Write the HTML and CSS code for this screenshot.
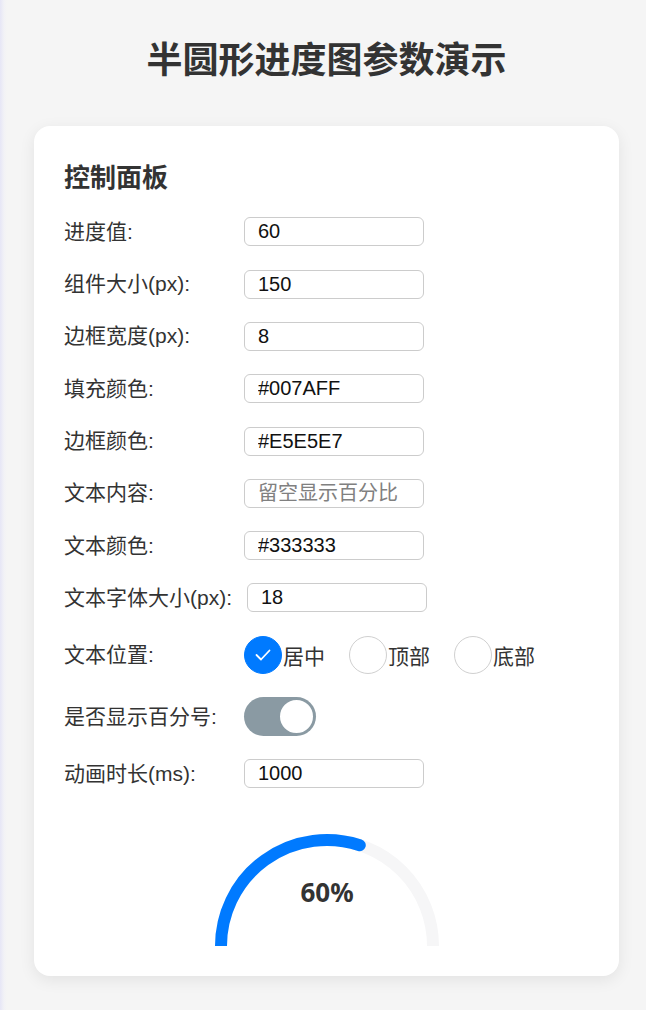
FILE: index.html
```html
<!DOCTYPE html>
<html lang="zh-CN">
<head>
  <meta charset="UTF-8">
  <meta name="viewport" content="width=device-width, initial-scale=1.0">
  <title>半圆形进度图参数演示</title>
  <link rel="stylesheet" href="styles.css">
</head>
<body>
  <div class="page">
    <h1>半圆形进度图参数演示</h1>

    <div class="panel">
      <h2>控制面板</h2>

      <div class="row">
        <label>进度值:</label>
        <input type="text" value="60">
      </div>
      <div class="row">
        <label>组件大小(px):</label>
        <input type="text" value="150">
      </div>
      <div class="row">
        <label>边框宽度(px):</label>
        <input type="text" value="8">
      </div>
      <div class="row">
        <label>填充颜色:</label>
        <input type="text" value="#007AFF">
      </div>
      <div class="row">
        <label>边框颜色:</label>
        <input type="text" value="#E5E5E7">
      </div>
      <div class="row">
        <label>文本内容:</label>
        <input type="text" placeholder="留空显示百分比">
      </div>
      <div class="row">
        <label>文本颜色:</label>
        <input type="text" value="#333333">
      </div>
      <div class="row">
        <label>文本字体大小(px):</label>
        <input type="text" value="18">
      </div>

      <div class="row">
        <label>文本位置:</label>
        <div class="radios">
          <span class="radio checked">
            <svg width="18" height="14" viewBox="0 0 18 14">
              <path d="M2.5 7 L7 11.5 L15.5 2.5" fill="none" stroke="#fff" stroke-width="1.8" stroke-linecap="round" stroke-linejoin="round"/>
            </svg>
          </span>
          <span class="radio-text">居中</span>
          <span class="radio"></span>
          <span class="radio-text">顶部</span>
          <span class="radio"></span>
          <span class="radio-text">底部</span>
        </div>
      </div>

      <div class="row">
        <label>是否显示百分号:</label>
        <span class="toggle"><span class="knob"></span></span>
      </div>

      <div class="row">
        <label>动画时长(ms):</label>
        <input type="text" value="1000">
      </div>

      <div class="chart">
        <svg width="236" height="118" viewBox="0 0 236 118">
          <!-- track -->
          <path d="M12 118 A106 106 0 0 1 224 118" fill="none" stroke="#f6f6f7" stroke-width="12" stroke-linecap="round"/>
          <!-- 60% -->
          <path d="M12 118 A106 106 0 0 1 150.76 17.19" fill="none" stroke="#007AFF" stroke-width="12" stroke-linecap="round"/>
          <text x="118" y="67" class="chart-text" text-anchor="middle" dominant-baseline="middle">60%</text>
        </svg>
      </div>
    </div>
  </div>
</body>
</html>
```

FILE: styles.css
```css
* {
  box-sizing: border-box;
  margin: 0;
  padding: 0;
}

body {
  font-family: "Liberation Sans", "Noto Sans CJK SC", sans-serif;
  color: #333;
  background: linear-gradient(to right, #e6e6f6 0px, #f2f2f6 4px, #f5f5f5 7px) #f5f5f5;
  padding-left: 7px;
  min-height: 100vh;
}

.page {
  width: 585px;
  margin: 0 auto;
}

h1 {
  font-family: "Noto Sans CJK SC", sans-serif;
  font-size: 36px;
  font-weight: bold;
  line-height: 1.2;
  text-align: center;
  color: #333;
  margin: 36px 0 47px;
}

.panel {
  background-color: #fff;
  border-radius: 16px;
  padding: 30px;
  box-shadow: 0px 4px 16px rgba(0, 0, 0, 0.08);
}

.panel h2 {
  font-family: "Noto Sans CJK SC", sans-serif;
  font-size: 26px;
  font-weight: bold;
  line-height: 1.2;
  margin: 4px 0 26px;
}

.row {
  display: flex;
  align-items: center;
  margin-bottom: 23.3px;
}

.row label {
  min-width: 165px;
  margin-right: 15px;
  font-size: 21px;
  line-height: 24px;
  color: #333;
}

.row input[type="text"] {
  width: 180px;
  height: 29px;
  border: 1px solid #ccc;
  border-radius: 6px;
  padding: 0 13px;
  font-family: "Liberation Sans", "Noto Sans CJK SC", sans-serif;
  font-size: 20px;
  color: #111;
  background: #fff;
}

.row input::placeholder {
  color: #808080;
  font-size: 20px;
}

.radios {
  display: flex;
  align-items: center;
}

.radio {
  width: 38px;
  height: 38px;
  border-radius: 50%;
  border: 1.5px solid #d0d0d0;
  background: #fff;
  display: flex;
  align-items: center;
  justify-content: center;
}

.radio.checked {
  background-color: #007AFF;
  border-color: #007AFF;
}

.radio-text {
  font-size: 21px;
  margin: 0 24px 0 1px;
}

.toggle {
  width: 72px;
  height: 39px;
  border-radius: 20px;
  background-color: #8a9aa3;
  display: flex;
  align-items: center;
  justify-content: flex-end;
  padding: 1px;
}

.knob {
  width: 37px;
  height: 37px;
  border-radius: 50%;
  background: #fff;
  border: 2px solid #8a9aa3;
}

.chart {
  display: flex;
  justify-content: center;
  margin-top: 40px;
}

.chart svg {
  display: block;
}

.chart-text {
  font-family: "Noto Sans", "Open Sans", sans-serif;
  font-size: 26px;
  font-weight: bold;
  fill: #333;
}
```
